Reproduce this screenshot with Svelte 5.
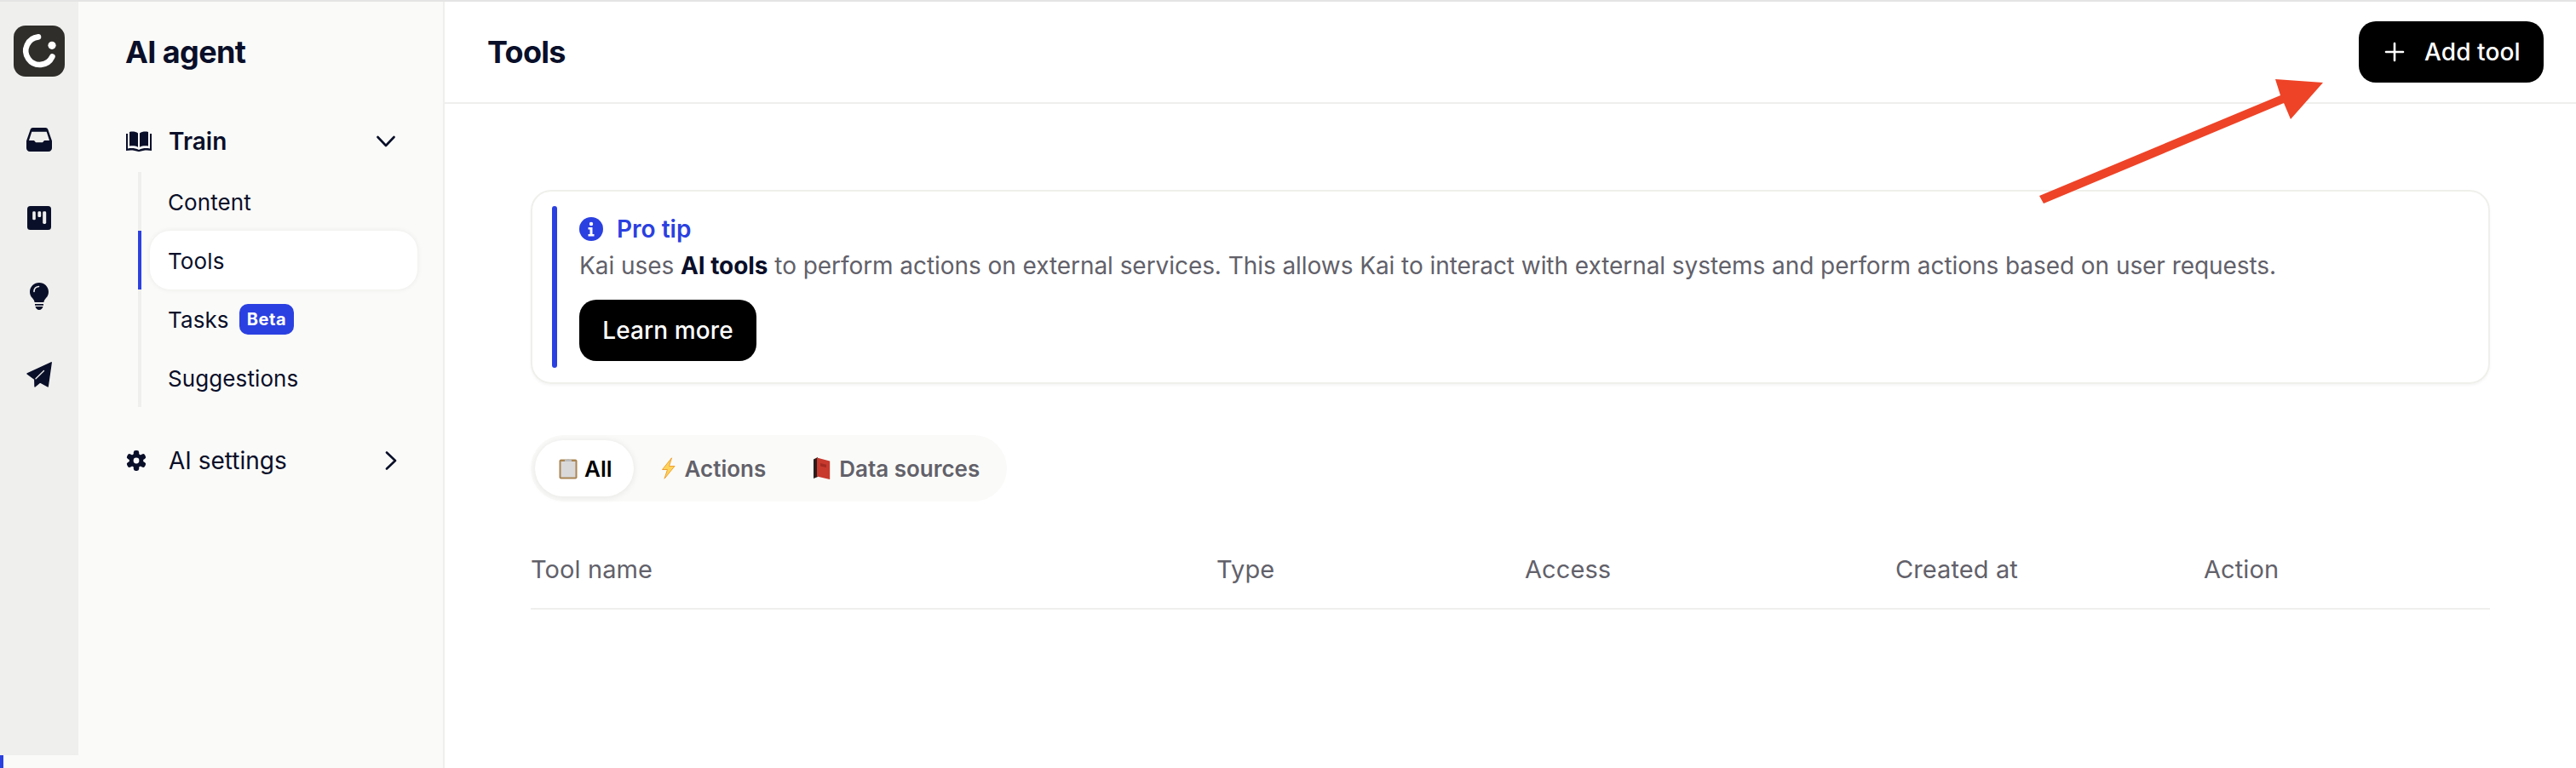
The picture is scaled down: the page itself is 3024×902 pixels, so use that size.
<script>
  const menu = [
    { label: 'Content' },
    { label: 'Tools', active: true },
    { label: 'Tasks', badge: 'Beta' },
    { label: 'Suggestions' }
  ];
  const cols = ['Tool name', 'Type', 'Access', 'Created at', 'Action'];
  const teeth = [0, 60, 120, 180, 240, 300];
</script>

<div class="page">
  <div class="topline"></div>
  <div class="shell">
    <div class="leftcol">
      <nav class="rail">
        <svg class="logo" viewBox="0 0 60 60" width="60" height="60">
          <rect width="60" height="60" rx="14" fill="#2f2e2b"/>
          <path d="M29 13.400A16.300 16.300 0 1 0 45.400 36.500" fill="none" stroke="#fff" stroke-width="6.600" stroke-linecap="round"/>
          <circle cx="45" cy="23.300" r="4.600" fill="#fff"/>
        </svg>
        <svg class="ic inbox" viewBox="0 0 30 28" width="30" height="28">
          <path fill="#0a0f29" fill-rule="evenodd" d="M7.500 0h15c1.300 0 2.400.8 2.800 2L30 15.500V24c0 2.200-1.800 4-4 4H4c-2.200 0-4-1.800-4-4v-8.500L4.700 2C5.100.8 6.200 0 7.500 0Zm-1.200 4.700L3 15h6l2 2.300h8L21 15h6L23.700 4.700H6.300Z"/>
        </svg>
        <svg class="ic board" viewBox="0 0 28 28" width="28" height="28">
          <rect width="28" height="28" rx="3.500" fill="#0a0f29"/>
          <rect x="6.200" y="6.300" width="3.600" height="10" rx="1.400" fill="#efefed"/>
          <rect x="12.400" y="6.300" width="3.800" height="6.800" rx="1.400" fill="#efefed"/>
          <rect x="18.200" y="6.300" width="4" height="14.700" rx="1.400" fill="#efefed"/>
        </svg>
        <svg class="ic bulb" viewBox="0 0 22 32" width="22" height="32">
          <path fill="#0a0f29" d="M11 0C5 0 0 4.700 0 10.700c0 3.200 1.300 5.500 3 7.400 1.300 1.500 2.300 3 2.600 4.900h10.800c.3-1.900 1.300-3.400 2.600-4.900 1.700-1.900 3-4.200 3-7.400C22 4.700 17 0 11 0Z"/>
          <path fill="#0a0f29" d="M6 25h10v1.800H6ZM6.500 28h9c-.4 2.300-2.300 4-4.500 4s-4.100-1.700-4.500-4Z"/>
          <path fill="none" stroke="#efefed" stroke-width="1.600" stroke-linecap="round" d="M5 10.500C5 7 7.500 4.800 10.500 4.500"/>
        </svg>
        <svg class="ic send" viewBox="0 0 30 30" width="30" height="30">
          <path fill="#0a0f29" stroke="#0a0f29" stroke-width="1.400" stroke-linejoin="round" d="M29.200.8 1 14l8.800 6.400.2 8.600 6-5 9.200 5Z"/>
          <path fill="none" stroke="#efefed" stroke-width="1.300" stroke-linecap="round" d="M11 19.800 20.500 10.500"/>
        </svg>
      </nav>
      <div class="railfoot"></div>
    </div>

    <aside class="side">
      <h2>AI agent</h2>
      <div class="group open">
        <svg viewBox="0 0 30 24" width="30" height="24">
          <path fill="#0a0f29" d="M0 3h2v17.500c4.500-.8 9-.5 13 1.500 4-2 8.500-2.300 13-1.500V3h2v20c-5-1-10-.6-14.500 1h-1C10 22.400 5 22 0 23Z"/>
          <path fill="#0a0f29" d="M4 1c3.500-.8 7.500-.4 10 1.500v16.300C11.300 17.300 7.500 17 4 17.600ZM26 1c-3.500-.8-7.500-.4-10 1.500v16.300c2.700-1.500 6.500-1.800 10-1.200Z"/>
        </svg>
        <span class="glabel strong">Train</span>
        <svg class="chev" viewBox="0 0 22 14" width="22" height="14"><path d="M1.500 2 11 12 20.500 2" fill="none" stroke="#0a0f29" stroke-width="2.600" stroke-linecap="round" stroke-linejoin="round"/></svg>
      </div>
      <ul class="sub">
        {#each menu as m}
          <li class:active={m.active}>
            <span class="item">
              {m.label}
              {#if m.badge}<b class="badge">{m.badge}</b>{/if}
            </span>
          </li>
        {/each}
      </ul>
      <div class="group settings">
        <svg viewBox="0 0 24 24" width="24" height="24">
          <g fill="#0a0f29">
            {#each teeth as t}
              <rect x="8.800" y="0" width="6.400" height="8" rx="2.400" transform="rotate({t} 12 12)"/>
            {/each}
            <circle cx="12" cy="12" r="8.300"/>
          </g>
          <circle cx="12" cy="12" r="3.400" fill="#fafaf8"/>
        </svg>
        <span class="glabel">AI settings</span>
        <svg class="chev right" viewBox="0 0 14 22" width="14" height="22"><path d="M2 1.500 12 11 2 20.500" fill="none" stroke="#0a0f29" stroke-width="2.600" stroke-linecap="round" stroke-linejoin="round"/></svg>
      </div>
    </aside>

    <main class="main">
      <header class="head">
        <h1>Tools</h1>
        <button class="btn add">
          <svg viewBox="0 0 24 24" width="24" height="24"><path d="M12 2v20M2 12h20" stroke="#fff" stroke-width="2.600" stroke-linecap="round"/></svg>
          Add tool
        </button>
      </header>

      <section class="content">
        <div class="tip">
          <div class="tipbar"></div>
          <div class="tipbody">
            <div class="tiptitle">
              <svg viewBox="0 0 28 28" width="28" height="28">
                <circle cx="14" cy="14" r="14" fill="#2b40e0"/>
                <circle cx="14" cy="8" r="2.200" fill="#fff"/>
                <path d="M10.500 12h5v8h2v2.500h-7V20h2v-5.500h-2Z" fill="#fff"/>
              </svg>
              Pro tip
            </div>
            <p>Kai uses <strong>AI tools</strong> to perform actions on external services. This allows Kai to interact with external systems and perform actions based on user requests.</p>
            <button class="btn learn">Learn more</button>
          </div>
        </div>

        <div class="tabs">
          <span class="tab on">
            <svg viewBox="0 0 22 26" width="22" height="26">
              <rect x=".5" y="2.500" width="21" height="23" rx="2" fill="#a98552"/>
              <rect x="2.500" y="5" width="17" height="18.500" fill="#d9d9d9"/>
              <path d="M7 5V3h2.500c.2-1.500 3-1.500 3 0H15v2Z" fill="#b9bcc0"/>
            </svg>
            All
          </span>
          <span class="tab">
            <svg viewBox="0 0 19 26" width="19" height="26">
              <path d="M13.500.8 2.500 14.500h6L5 25.200 17 10.500h-6.500Z" fill="#fdd35a" stroke="#f0a030" stroke-width="1" stroke-linejoin="round"/>
            </svg>
            Actions
          </span>
          <span class="tab">
            <svg viewBox="0 0 20 26" width="20" height="26">
              <path d="M0 2.500 5 0v23l-5 2Z" fill="#2a1d1d"/>
              <path d="M4 .5 19 4.500V26L4 22.500Z" fill="#c8392e"/>
              <path d="M8 7l7 1.800V12L8 10.400Z" fill="#a32a22"/>
              <path d="M19 4.500h1V26h-1Z" fill="#e8dcd0"/>
            </svg>
            Data sources
          </span>
        </div>

        <div class="thead">
          {#each cols as c}<span>{c}</span>{/each}
        </div>
      </section>

      <svg class="arrow" viewBox="0 0 340 150" width="340" height="150" aria-hidden="true">
        <polygon fill="#ee4327" points="3,138 8,147 290,29 298,48 336,5 280,1 286,20"/>
      </svg>
    </main>
  </div>
</div>

<style>
  :global(body) { margin: 0; background: #fff; }
  .page {
    width: 3024px;
    height: 902px;
    display: flex;
    flex-direction: column;
    overflow: hidden;
    font-family: Inter, "Noto Sans", "Liberation Sans", sans-serif;
    color: #0a0f29;
    background: #fff;
  }
  .topline { height: 2px; background: #e4e4e4; flex: none; }
  .shell { flex: 1; display: flex; min-height: 0; }

  .leftcol { width: 92px; flex: none; display: flex; flex-direction: column; }
  .rail {
    flex: 1;
    background: #efefed;
    display: flex;
    flex-direction: column;
    align-items: center;
    padding-top: 28px;
  }
  .railfoot { height: 15px; background: #fafaf8; border-left: 4px solid #2b40e0; }
  .logo { display: block; }
  .ic { display: block; }
  .inbox { margin-top: 60px; }
  .board { margin-top: 64px; }
  .bulb { margin-top: 62px; }
  .send { margin-top: 61px; }

  .side {
    width: 430px;
    flex: none;
    box-sizing: border-box;
    background: #fafaf8;
    border-right: 2px solid #efefed;
    padding: 0 32px 0 55px;
  }
  .side h2 {
    margin: 37px 0 0;
    font-size: 36px;
    line-height: 44px;
    font-weight: 700;
    letter-spacing: -0.6px;
  }
  .group { display: flex; align-items: center; height: 40px; }
  .group.open { margin-top: 63px; }
  .group svg:first-child { flex: none; margin-left: 1px; }
  .glabel { font-size: 28px; margin-left: 20px; flex: 1; }
  .glabel.strong { font-weight: 600; }
  .settings .glabel { margin-left: 26px; }
  .chev { flex: none; margin-right: 24px; }
  .chev.right { margin-right: 22px; }
  .settings { margin-top: 43px; }

  .sub {
    list-style: none;
    margin: 16px 0 0 15px;
    padding: 0;
    border-left: 4px solid #efefed;
    display: flex;
    flex-direction: column;
    width: 324px;
  }
  .sub li { height: 69px; display: flex; margin-left: -4px; border-left: 4px solid transparent; }
  .sub li.active { border-left-color: #2b40e0; }
  .item {
    flex: 1;
    margin-left: 10px;
    padding: 2px 0 0 21px;
    display: flex;
    align-items: center;
    gap: 12px;
    font-size: 26px;
    letter-spacing: 0.1px;
    border-radius: 24px;
  }
  .active .item {
    background: #fff;
    box-shadow: 0 0 6px rgba(20, 20, 10, 0.07);
  }
  .badge {
    background: #2b40e0;
    color: #fff;
    font-size: 20px;
    font-weight: 700;
    letter-spacing: 0.6px;
    height: 36px;
    line-height: 36px;
    padding: 0 9px;
    border-radius: 10px;
    margin-top: -1px;
  }

  .main { flex: 1; position: relative; min-width: 0; }
  .head {
    height: 118px;
    border-bottom: 2px solid #efefed;
    display: flex;
    align-items: center;
    justify-content: space-between;
    padding: 0 38px 0 50px;
  }
  .head h1 { margin: 0; font-size: 36px; font-weight: 700; letter-spacing: -0.7px; }
  .btn {
    border: 0;
    background: #000;
    color: #fff;
    font-family: inherit;
    font-size: 28px;
    font-weight: 500;
    letter-spacing: 0.1px;
    height: 72px;
    border-radius: 20px;
    display: inline-flex;
    align-items: center;
  }
  .add { width: 217px; padding: 0 0 0 30px; gap: 23px; }
  .learn { width: 208px; justify-content: center; padding: 0; }

  .content { padding: 101px 101px 0 101px; }
  .tip {
    box-sizing: border-box;
    height: 228px;
    border: 2px solid #efefeb;
    border-radius: 24px;
    box-shadow: 0 2px 3px rgba(20, 20, 10, 0.04);
    padding: 17px 0 17px 23px;
    display: flex;
    gap: 26px;
  }
  .tipbar { width: 6px; background: #2b40e0; border-radius: 3px; }
  .tipbody { flex: 1; }
  .tiptitle {
    display: flex;
    align-items: center;
    gap: 16px;
    height: 32px;
    margin-top: 11px;
    font-size: 28px;
    font-weight: 600;
    color: #2b40e0;
  }
  .tip p {
    margin: 7px 0 0;
    font-size: 28px;
    line-height: 40px;
    letter-spacing: -0.06px;
    color: #62616a;
  }
  .tip strong { color: #0a0f29; font-weight: 700; }
  .learn { margin-top: 20px; }

  .tabs {
    display: inline-flex;
    align-items: center;
    margin-top: 60px;
    height: 78px;
    box-sizing: border-box;
    padding: 0 7px 0 5px;
    border-radius: 39px;
    background: #fafaf8;
    vertical-align: top;
  }
  .tab {
    display: flex;
    align-items: center;
    gap: 10px;
    height: 66px;
    font-size: 26px;
    font-weight: 600;
    color: #62616a;
    padding: 0 25px 0 31px;
  }
  .tab.on {
    background: #fff;
    border-radius: 33px;
    color: #000;
    gap: 8px;
    padding: 0 25px 0 28px;
    box-shadow: 0 1px 8px rgba(20, 20, 10, 0.09);
  }
  .thead {
    display: grid;
    grid-template-columns: 805px 362px 435px 362px 1fr;
    margin-top: 33px;
    height: 92px;
    align-items: center;
    border-bottom: 2px solid #efefed;
    font-size: 29px;
    letter-spacing: 0.1px;
    color: #62616a;
  }
  .arrow { position: absolute; left: 1869px; top: 90px; }
</style>
